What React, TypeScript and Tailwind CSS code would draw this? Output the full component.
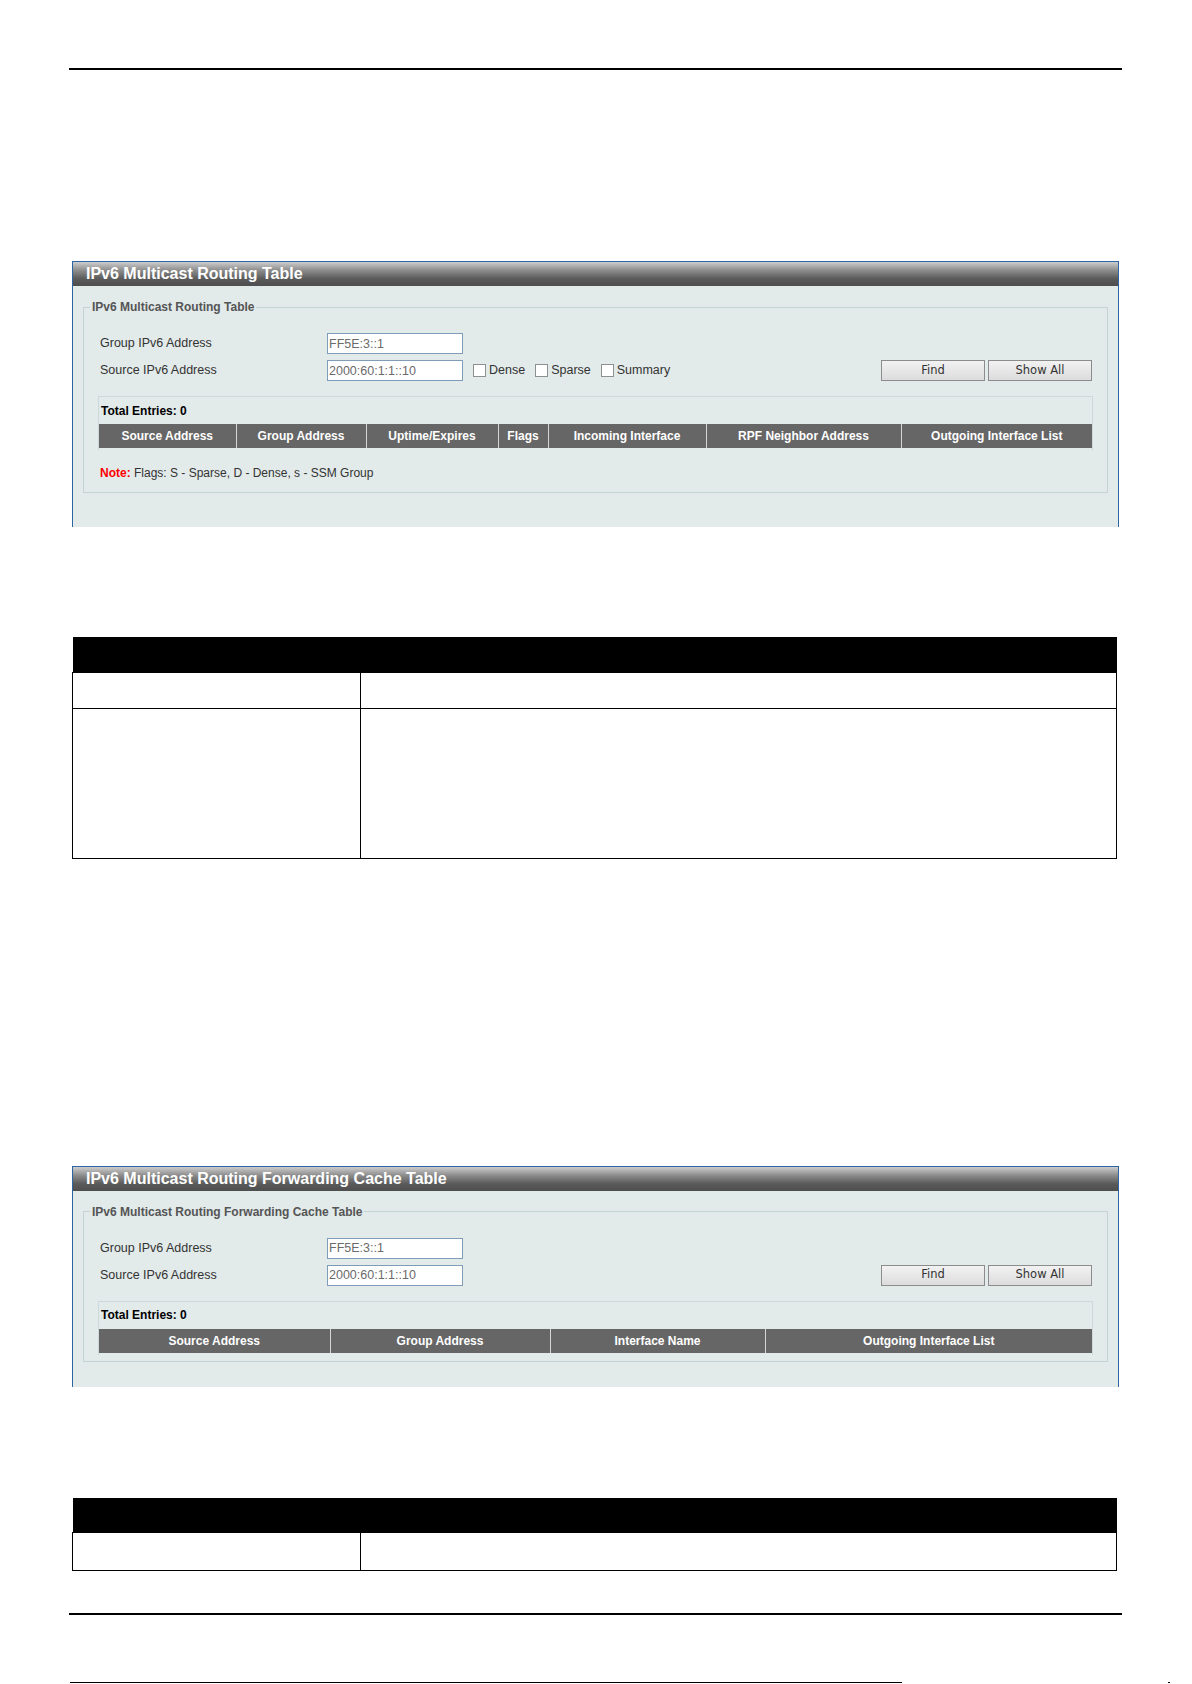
import React from "react";

const font = "font-['Liberation_Sans',Arial,sans-serif]";

type Col = { label: string; w: number };

const routingCols: Col[] = [
  { label: "Source Address", w: 137 },
  { label: "Group Address", w: 130 },
  { label: "Uptime/Expires", w: 132 },
  { label: "Flags", w: 50 },
  { label: "Incoming Interface", w: 158 },
  { label: "RPF Neighbor Address", w: 195 },
  { label: "Outgoing Interface List", w: 191 },
];

const cacheCols: Col[] = [
  { label: "Source Address", w: 231 },
  { label: "Group Address", w: 220 },
  { label: "Interface Name", w: 215 },
  { label: "Outgoing Interface List", w: 327 },
];

function AddrInput({ value }: { value: string }) {
  return (
    <input
      readOnly
      value={value}
      className="w-[136px] h-[21px] border border-[#7f9db9] bg-white px-[1px] text-[12.5px] text-[#6b6b6b] outline-none"
    />
  );
}

function Check({ label }: { label: string }) {
  return (
    <label className="flex items-center gap-[3px] mr-[10px] text-[12.5px] text-[#333]">
      <span className="w-[13px] h-[13px] border border-[#8e8f8f] bg-white" />
      {label}
    </label>
  );
}

function Btn({ label }: { label: string }) {
  return (
    <button className="w-[104px] h-[21px] border border-[#8c8c8c] bg-[linear-gradient(to_bottom,#f2f2f2,#dcdcdc)] text-[11.5px] text-[#333] font-['DejaVu_Sans',Verdana,sans-serif]">
      {label}
    </button>
  );
}

function HeaderTable({ cols }: { cols: Col[] }) {
  return (
    <table className="w-full border-collapse table-fixed">
      <thead>
        <tr className="h-[24px] bg-[#666666]">
          {cols.map((c, i) => (
            <th
              key={c.label}
              style={{ width: c.w }}
              className={`text-[12px] font-bold text-white text-center ${i < cols.length - 1 ? "border-r border-[#d6d6d6]" : ""}`}
            >
              {c.label}
            </th>
          ))}
        </tr>
      </thead>
    </table>
  );
}

function Panel({
  title,
  cols,
  checks,
  note,
  bottomPad,
}: {
  title: string;
  cols: Col[];
  checks?: boolean;
  note?: boolean;
  bottomPad: string;
}) {
  return (
    <div className={`ml-[72px] w-[1047px] border-t border-x border-[#2c64a6] bg-[#e2eaea] ${bottomPad}`}>
      <div className="h-[24px] flex items-center pl-[13px] bg-[linear-gradient(to_bottom,#cdcdcd_0%,#8c8c8c_35%,#5a5a5a_70%,#4e4e4e_100%)]">
        <span className="text-[16px] font-bold text-white leading-none">{title}</span>
      </div>
      <fieldset className="mt-[14px] ml-[10px] mr-[11px] border border-[#c3d2d5] px-[14px] pb-[6px]">
        <legend className="-ml-[8px] px-[2px] text-[12px] leading-[14px] font-bold text-[#555]">{title}</legend>
        <div className="pt-[19px] flex items-center h-[21px] box-content">
          <span className="w-[229px] pl-[2px] text-[12.5px] text-[#333]">Group IPv6 Address</span>
          <AddrInput value="FF5E:3::1" />
        </div>
        <div className="mt-[6px] flex items-center h-[21px]">
          <span className="w-[229px] pl-[2px] text-[12.5px] text-[#333]">Source IPv6 Address</span>
          <AddrInput value="2000:60:1:1::10" />
          {checks && (
            <div className="ml-[10px] flex items-center">
              <Check label="Dense" />
              <Check label="Sparse" />
              <Check label="Summary" />
            </div>
          )}
          <div className="ml-auto mr-[1px] flex gap-[3px]">
            <Btn label="Find" />
            <Btn label="Show All" />
          </div>
        </div>
        <div className="mt-[15px] border-t border-x border-[#cdd8da] pb-[2px]">
          <div className="h-[27px] flex items-center pl-[2px] text-[12px] font-bold text-black">Total Entries: 0</div>
          <HeaderTable cols={cols} />
        </div>
        {note && (
          <div className="mt-[14px] mb-[4px] pl-[2px] text-[12px] text-[#333]">
            <span className="font-bold text-[#ff0000]">Note:</span> Flags: S - Sparse, D - Dense, s - SSM Group
          </div>
        )}
      </fieldset>
    </div>
  );
}

function BlackTable({ rows }: { rows: number[] }) {
  return (
    <table className="ml-[72px] w-[1045px] border-collapse table-fixed">
      <thead>
        <tr className="h-[35px] bg-black">
          <th className="w-[288px]" />
          <th />
        </tr>
      </thead>
      <tbody>
        {rows.map((h, i) => (
          <tr key={i} style={{ height: h }}>
            <td className="border-[1.5px] border-black" />
            <td className="border-[1.5px] border-black" />
          </tr>
        ))}
      </tbody>
    </table>
  );
}

export default function App() {
  return (
    <div className={`w-[1192px] h-[1684px] bg-white overflow-hidden flex flex-col ${font}`}>
      <div className="mt-[68px] ml-[69px] w-[1053px] h-[2px] bg-black" />

      <div className="mt-[191px]">
        <Panel title="IPv6 Multicast Routing Table" cols={routingCols} checks note bottomPad="pb-[34px]" />
      </div>

      <div className="mt-[110px]">
        <BlackTable rows={[36, 150]} />
      </div>

      <div className="mt-[307px]">
        <Panel title="IPv6 Multicast Routing Forwarding Cache Table" cols={cacheCols} bottomPad="pb-[25px]" />
      </div>

      <div className="mt-[111px]">
        <BlackTable rows={[38]} />
      </div>

      <div className="mt-[42px] ml-[69px] w-[1053px] h-[2px] bg-black" />

      <div className="mt-auto mb-[1px] flex items-end">
        <div className="ml-[70px] w-[832px] h-[1px] bg-black" />
        <div className="ml-[266px] w-[2px] h-[1px] bg-black" />
      </div>
    </div>
  );
}
